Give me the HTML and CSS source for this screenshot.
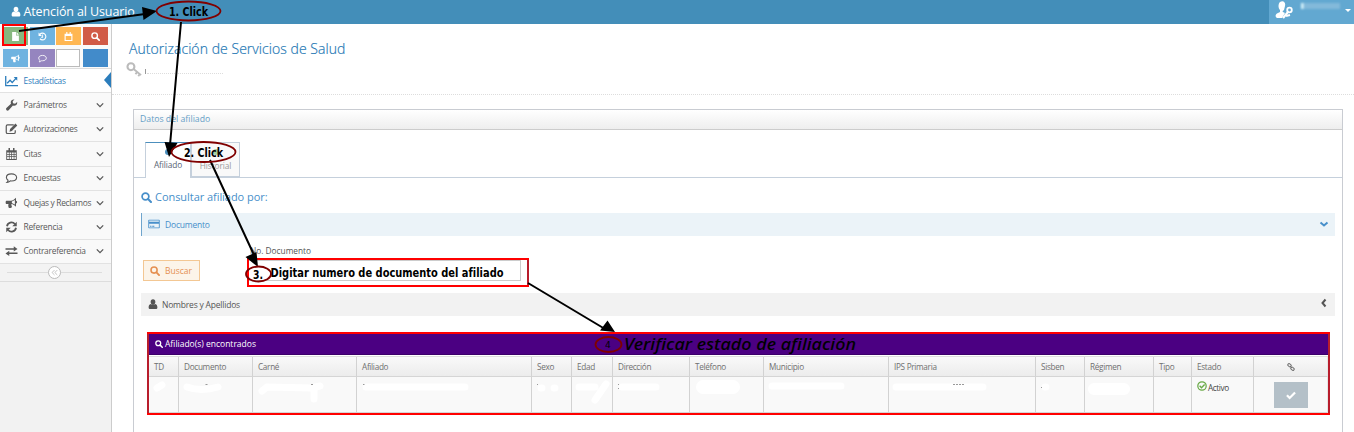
FILE: index.html
```html
<!DOCTYPE html>
<html lang="es">
<head>
<meta charset="utf-8">
<title>Atención al Usuario</title>
<link rel="stylesheet" href="styles.css">
</head>
<body>
<svg class="defs" width="0" height="0">
  <symbol id="user" viewBox="0 0 16 16"><path d="M8 .5c2.500 0 3.800 1.700 3.800 4.200S10 9 8 9 4.200 7.200 4.200 4.700 5.500.500 8 .500zM4.300 8C5.500 9.600 10.500 9.600 11.700 8c2.500.4 3.300 3 3.300 5.400 0 1.600-1 2.600-2.600 2.600H3.600C2 16 1 15 1 13.400 1 11 1.800 8.400 4.300 8z"/></symbol>
  <symbol id="search" viewBox="0 0 16 16"><circle cx="6.500" cy="6.500" r="4.900" fill="none" stroke="currentColor" stroke-width="2.500"/><path d="M10.300 10.300l4.200 4.200" stroke="currentColor" stroke-width="3" stroke-linecap="round"/></symbol>
  <symbol id="file" viewBox="0 0 16 16"><path d="M2 0h7v6h5v10H2zM10 0l4 5h-4z"/></symbol>
  <symbol id="history" viewBox="0 0 16 16"><path d="M3 4.500A6 6 0 1 1 3.500 12" fill="none" stroke="currentColor" stroke-width="2"/><path d="M1 1v6h6zM7.500 4.500H9V10H5.500V8.500h2z"/></symbol>
  <symbol id="calendar" viewBox="0 0 16 16"><path fill-rule="evenodd" d="M1 3h3V0h2v3h4V0h2v3h3v13H1zM2.200 6v2h2.300V6zm3.300 0v2h2.200V6zm3.200 0v2h2.200V6zm3.200 0v2h1.900V6zM2.200 9v2h2.300V9zm3.300 0v2h2.200V9zm3.200 0v2h2.200V9zm3.200 0v2h1.900V9zM2.200 12v2.500h2.300V12zm3.300 0v2.500h2.200V12zm3.200 0v2.500h2.200V12zm3.200 0v2.500h1.900V12z"/></symbol>
  <symbol id="calendar-o" viewBox="0 0 16 16"><path fill-rule="evenodd" d="M1 3h3V0h2v3h4V0h2v3h3v13H1zM3 7v7h10V7z"/></symbol>
  <symbol id="horn" viewBox="0 0 16 16"><path fill-rule="evenodd" d="M1 5h6c3 0 5-2 7-4v4c2 0 2 3.500 0 3.500V13c-2-2-4-3.500-6-3.700-.8 1.700.8 2.500.5 4C8 15 6 15 4.500 14.500 3.500 12.500 3.500 11 4 9.300H1c-1 0-1-4.300 0-4.300zM12.500 4L8.500 6v2l4 2z"/></symbol>
  <symbol id="comment" viewBox="0 0 16 16"><path d="M8 2.500c4 0 6.800 2 6.800 4.800S12 12 8 12l-1.500-.1C5 13.300 3.800 14 2 14c1-.9 1.300-1.700 1.400-3C2 10 1.200 8.800 1.200 7.300 1.200 4.500 4 2.500 8 2.500z" fill="none" stroke="currentColor" stroke-width="1.500"/></symbol>
  <symbol id="chart" viewBox="0 0 18 16"><path d="M1 1v13.500h17M3 11l4-4 3 3 5.500-6" fill="none" stroke="currentColor" stroke-width="1.800"/><path d="M12 2.500h5v5z"/></symbol>
  <symbol id="wrench" viewBox="0 0 16 16"><path d="M15.500 4c.8 3.500-2.500 6-5.600 4.800L4.200 15c-1.800 1.700-4.600-.9-3-2.900L7.300 6.200C6 3 8.500.1 12 .6L9.600 3l.4 2.800 2.800.5z"/></symbol>
  <symbol id="edit" viewBox="0 0 16 16"><path d="M11 2.500H2.700Q1 2.500 1 4.200v8.100Q1 14 2.700 14h8.600Q13 14 13 12.300V9.500" fill="none" stroke="currentColor" stroke-width="1.600"/><path d="M13.300.8l2.400 2.400L8.500 10.500 5.300 11.500 6.100 8z"/></symbol>
  <symbol id="refresh" viewBox="0 0 16 16"><path d="M2 7a6 6 0 0 1 10.500-3M14 9A6 6 0 0 1 3.500 12" fill="none" stroke="currentColor" stroke-width="2.400"/><path d="M15 1v6H9zM1 15V9h6z"/></symbol>
  <symbol id="exchange" viewBox="0 0 16 16"><path d="M0 4.200h11V1.700L16 5.300l-5 3.500V6.300H0zM16 10H5V7.700L0 11.200l5 3.500v-2.600h11z"/></symbol>
  <symbol id="down" viewBox="0 0 10 10"><path d="M1 3l4 4 4-4" fill="none" stroke="currentColor" stroke-width="1.600"/></symbol>
  <symbol id="key" viewBox="0 0 18 16"><circle cx="5.200" cy="5" r="3.700" fill="none" stroke="currentColor" stroke-width="2.200"/><path d="M8 7.500l8 6.500M12 10.500l-2 2.500M15 12.500l-2 2.500" fill="none" stroke="currentColor" stroke-width="2"/></symbol>
  <symbol id="card" viewBox="0 0 16 14"><path fill-rule="evenodd" d="M1 1h14q1 0 1 1v10q0 1-1 1H1q-1 0-1-1V2q0-1 1-1zm.2 1.200v1.600h13.600V2.200zM1.200 6.500v5.300h13.600V6.500zM2.500 9.500h2v1.200h-2zm3 0h3v1.200h-3z"/></symbol>
  <symbol id="link" viewBox="0 0 16 16"><g fill="none" stroke="currentColor" stroke-width="2"><rect x="1.500" y="2" width="7" height="5" rx="2" transform="rotate(40 5 4.500)"/><rect x="7.500" y="9" width="7" height="5" rx="2" transform="rotate(40 11 11.500)"/><path d="M6 6l4 4"/></g></symbol>
  <symbol id="check" viewBox="0 0 16 16"><path d="M1.500 8.500l4.300 4.200L14.500 4" fill="none" stroke="currentColor" stroke-width="3.600"/></symbol>
  <symbol id="ok" viewBox="0 0 16 16"><circle cx="8" cy="8" r="6.700" fill="none" stroke="currentColor" stroke-width="2"/><path d="M4.200 7.700l3 3 5-5" fill="none" stroke="currentColor" stroke-width="2.300"/></symbol>
</svg>

<header class="topbar">
  <div class="brand"><svg><use href="#user"/></svg><span>Atención al Usuario</span></div>
  <div class="account">
    <svg class="avatar" viewBox="0 0 18 18"><path d="M5 1c3-2 6 0 5 4L9 9c-1 1-2 1-1 2l2 1-3 5H2c-2-1-2-4 1-5l2-1V9C3 7 3 3 5 1z"/><path d="M8 17l5-6" stroke="#fff" stroke-width="2.200"/><circle cx="14.500" cy="9" r="2.300" fill="none" stroke="#fff" stroke-width="1.800"/><path d="M11 15l4-1" stroke="#fff" stroke-width="2"/></svg>
    <span class="masked-name"></span><i class="caret"></i>
  </div>
</header>

<div class="layout">
  <aside class="sidebar">
    <div class="shortcuts">
      <span class="sc green"><svg><use href="#file"/></svg></span>
      <span class="sc sky"><svg><use href="#history"/></svg></span>
      <span class="sc orange"><svg><use href="#calendar-o"/></svg></span>
      <span class="sc red"><svg><use href="#search"/></svg></span>
      <span class="sc sky"><svg><use href="#horn"/></svg></span>
      <span class="sc purple"><svg><use href="#comment"/></svg></span>
      <span class="sc blank"></span>
      <span class="sc blue"></span>
    </div>
    <nav class="menu">
      <a class="item active"><svg class="ic"><use href="#chart"/></svg><span>Estadísticas</span></a>
      <a class="item"><svg class="ic"><use href="#wrench"/></svg><span>Parámetros</span><svg class="arr"><use href="#down"/></svg></a>
      <a class="item"><svg class="ic"><use href="#edit"/></svg><span>Autorizaciones</span><svg class="arr"><use href="#down"/></svg></a>
      <a class="item"><svg class="ic"><use href="#calendar"/></svg><span>Citas</span><svg class="arr"><use href="#down"/></svg></a>
      <a class="item"><svg class="ic"><use href="#comment"/></svg><span>Encuestas</span><svg class="arr"><use href="#down"/></svg></a>
      <a class="item"><svg class="ic"><use href="#horn"/></svg><span>Quejas y Reclamos</span><svg class="arr"><use href="#down"/></svg></a>
      <a class="item"><svg class="ic"><use href="#refresh"/></svg><span>Referencia</span><svg class="arr"><use href="#down"/></svg></a>
      <a class="item"><svg class="ic"><use href="#exchange"/></svg><span>Contrareferencia</span><svg class="arr"><use href="#down"/></svg></a>
    </nav>
    <div class="collapse"><span><svg viewBox="0 0 10 10"><path d="M5 1.500L1.500 5 5 8.500M9 1.500L5.500 5 9 8.500" fill="none" stroke="currentColor"/></svg></span></div>
  </aside>

  <main class="content">
    <div class="page-head">
      <h1>Autorización de Servicios de Salud</h1>
      <div class="sub"><svg><use href="#key"/></svg><i></i><b></b></div>
    </div>
    <section class="panel">
      <h2 class="panel-title">Datos del afiliado</h2>
      <div class="tabs">
        <div class="tab current"><i></i><span>Afiliado</span></div>
        <div class="tab"><i></i><span>Historial</span></div>
      </div>
      <div class="panel-body">
        <h3 class="query"><svg><use href="#search"/></svg><span>Consultar afiliado por:</span></h3>
        <div class="acc open"><svg class="ic"><use href="#card"/></svg><span>Documento</span><svg class="chev" viewBox="0 0 10 10"><path d="M1.500 3.500L5 6.500l3.500-3" fill="none" stroke="currentColor" stroke-width="2"/></svg></div>
        <div class="form">
          <button class="buscar"><svg><use href="#search"/></svg><span>Buscar</span></button>
          <div class="field"><label>No. Documento</label><div class="input"></div></div>
        </div>
        <div class="acc"><svg class="ic"><use href="#user"/></svg><span>Nombres y Apellidos</span><svg class="chev left" viewBox="0 0 10 10"><path d="M6.500 1.500L3.500 5l3 3.500" fill="none" stroke="currentColor" stroke-width="2"/></svg></div>
        <div class="results">
          <div class="results-title"><svg><use href="#search"/></svg><span>Afiliado(s) encontrados</span></div>
          <table>
            <colgroup><col class="w30"><col class="w74"><col class="w104"><col class="w175"><col class="w40"><col class="w41"><col class="w77"><col class="w74"><col class="w125"><col class="w147"><col class="w49"><col class="w69"><col class="w38"><col class="w62"><col class="w74"></colgroup>
            <thead><tr><th>TD</th><th>Documento</th><th>Carné</th><th>Afiliado</th><th>Sexo</th><th>Edad</th><th>Dirección</th><th>Teléfono</th><th>Municipio</th><th>IPS Primaria</th><th>Sisben</th><th>Régimen</th><th>Tipo</th><th>Estado</th><th class="mid"><svg><use href="#link"/></svg></th></tr></thead>
            <tbody><tr><td></td><td></td><td></td><td></td><td></td><td></td><td></td><td></td><td></td><td></td><td></td><td></td><td></td><td><div class="state"><svg><use href="#ok"/></svg><span>Activo</span></div></td><td class="mid"><span class="pick"><svg><use href="#check"/></svg></span></td></tr></tbody>
          </table>
        </div>
      </div>
    </section>
  </main>
</div>

<svg class="notes" width="1354" height="432" viewBox="0 0 1354 432">
  <!-- erased cell values -->
  <g fill="none" stroke="#fff" stroke-width="7" stroke-linecap="round">
    <path d="M157 388l5-3M187 387q14 5 31 0M262 391l5-4 44 1 9-2M314 389v10M366 387h99M541 388h1M554 388h1M579 387h16M606 384l-11 16M622 387h34M772 386h69M896 387h87M1045 387h1"/>
    <path d="M703 387h30" stroke-width="14"/><path d="M1094 389h30" stroke-width="12"/>
  </g>
  <path d="M205.500 384.500h2M311 384.500h3M363 384.500h1.500M537.500 384v1M618.500 384v1M618.500 388v1M953 384.500h12M1041.500 387v1" stroke="#999" stroke-width="1" stroke-dasharray="2 1" fill="none"/>
  <g fill="none" stroke="#f00" stroke-width="2">
    <rect x="3" y="25" width="22" height="20"/>
    <rect x="248" y="259" width="280" height="27"/>
    <rect x="148" y="333" width="1181" height="81"/>
  </g>
  <path d="M148 334v79M1329 334v79M528 260v25" stroke="#b81d2c" stroke-width="2"/>
  <g stroke="#000" stroke-width="2">
    <path d="M19 31L145 14M181 22L170 145M210 160L254 255M528 283L605 329"/>
  </g>
  <path d="M157 11l-15-4 1.500 13zM169 157l-4.500-15 13 1zM258 267l-12.500-10 11-5zM615 332l-15-1.500 7.500-10z"/>
  <g fill="none" stroke="#800000" stroke-width="1.800">
    <ellipse cx="188.500" cy="11" rx="32" ry="9.500"/><ellipse cx="203.500" cy="152" rx="32" ry="10"/><ellipse cx="258.500" cy="274" rx="12.500" ry="7.500"/><ellipse cx="608.500" cy="344.500" rx="13" ry="7.500"/>
  </g>
  <g class="bold">
    <text x="169" y="16" textLength="39" lengthAdjust="spacingAndGlyphs">1. Click</text>
    <text x="184" y="157" textLength="39" lengthAdjust="spacingAndGlyphs">2. Click</text>
    <text x="253" y="279" textLength="10" lengthAdjust="spacingAndGlyphs">3.</text>
    <text x="270.500" y="277" textLength="233" lengthAdjust="spacingAndGlyphs">Digitar numero de documento del afiliado</text>
  </g>
  <text class="four" x="605" y="348">4</text>
  <text class="verify" x="624" y="350" textLength="232" lengthAdjust="spacingAndGlyphs">Verificar estado de afiliación</text>
</svg>
</body>
</html>
```
FILE: styles.css
```css
* { box-sizing: border-box; }
body { margin: 0; width: 1354px; height: 432px; overflow: hidden; background: #fff; font: 8px "Open Sans", sans-serif; color: #555; }
svg { fill: currentColor; flex: none; }
.defs { position: absolute; }
h1, h2, h3 { margin: 0; font-weight: 400; }
.topbar { height: 24px; background: #438eb9; color: #fff; display: flex; justify-content: space-between; }
.brand { display: flex; align-items: center; padding: 0 0 2px 11px; gap: 2.500px; font-size: 12.500px; letter-spacing: -.12px; }
.brand svg { width: 10px; height: 11px; }
.account { width: 85px; background: #62a8d1; display: flex; align-items: flex-start; padding-left: 6px; }
.avatar { width: 18px; height: 18px; margin-top: 1px; }
.masked-name { width: 39px; height: 6px; margin: 3px 0 0 8px; background: linear-gradient(90deg, #d8f3fb 0 2px, #83b9da 3px, #83b9da); filter: blur(1px); }
.caret { border: 3px solid transparent; border-top-color: #fff; margin: 9px 0 0 5px; }
.layout { display: flex; height: 408px; }
.sidebar { width: 112px; background: #f2f2f2; border-right: 1px solid #ccc; }
.shortcuts { height: 45px; background: #fafafa; border-bottom: 1px solid #ddd; display: grid; grid-template-columns: repeat(4, 25px); grid-auto-rows: 18px; gap: 4px 1.500px; padding: 3px 0 0 3px; }
.sc { display: flex; align-items: center; justify-content: center; color: #fff; }
.sc svg { width: 9px; height: 9px; }
.green { background: #87b87f; } .sky { background: #6fb3e0; } .orange { background: #ffb752; } .red { background: #d15b47; }
.purple { background: #9585bf; } .blank { background: #fff; border: 1px solid #bbb; margin-right: 1px; } .blue { background: #428bca; }
.item { height: 24.400px; display: flex; align-items: center; background: #f9f9f9; border-bottom: 1px solid #e2e2e2; padding: 0 0 1px 5px; color: #585858; font-size: 8.400px; }
.item .ic { width: 13px; height: 12px; margin: 1px 5.500px 0 0; }
.item .arr { width: 8px; height: 8px; margin: 1px 7px 0 auto; }
.item span { white-space: nowrap; letter-spacing: -.25px; }
.item:nth-child(6) span { letter-spacing: -.32px; }
.active { background: #fff; color: #2b7dbc; position: relative; }
.active::after { content: ""; position: absolute; right: 0; top: 3px; border: 8px solid transparent; border-width: 8.500px 7px 8.500px 0; border-right-color: #2b7dbc; }
.collapse { height: 18px; border-bottom: 1px solid #ddd; display: flex; justify-content: center; align-items: center; background: linear-gradient(#ddd, #ddd) 7px 8px / 95px 1px no-repeat #f3f3f3; }
.collapse span { width: 13px; height: 13px; border: 1px solid #bbb; border-radius: 50%; background: #fff; color: #aaa; display: flex; align-items: center; justify-content: center; margin-right: 2px; }
.collapse svg { width: 7px; height: 7px; }
.content { width: 1242px; }
.page-head { height: 71px; border-bottom: 1px dotted #ddd; padding: 15px 0 0 17px; }
h1 { color: #2679b5; font-size: 14px; font-weight: 300; line-height: 20px; letter-spacing: .05px; white-space: nowrap; -webkit-text-stroke: .2px #2679b5; }
.sub { display: flex; align-items: center; margin: 3px 0 0 -3px; color: #bbb; height: 15px; }
.sub svg { width: 17px; height: 15px; }
.sub i { width: 1px; height: 5px; background: #999; margin: 4px 0 0 2px; }
.sub b { border-bottom: 1px dotted #ddd; width: 76px; margin: 7px 0 0 1px; }
.panel { width: 1210px; height: 323px; margin: 14px 0 0 21px; border: 1px solid #c9ccd2; border-bottom: 0; }
.panel-title { height: 20px; line-height: 19px; padding-left: 6px; border-bottom: 1px solid #ccc; background: linear-gradient(#fff, #eee); color: #669fc7; font-size: 8.700px; }
.tabs { height: 48px; display: flex; align-items: flex-end; border-bottom: 1px solid #c5d0dc; padding-left: 11px; }
.tab { width: 49px; height: 35px; border: 1px solid #c5d0dc; background: #f9f9f9; color: #999; display: flex; flex-direction: column; align-items: center; font-size: 8.300px; letter-spacing: -.1px; padding-top: 6px; }
.tab i { width: 6px; height: 6px; background: #a5cf9e; border-radius: 3px; }
.tab span { line-height: 11px; margin-top: 5px; }
.current { width: 46px; height: 36px; margin-bottom: -1px; background: #fff; color: #576373; border-top: 1px solid #4c8fbd; border-bottom: 0; }
.current i { background: #4c8fbd; }
.current span { margin-top: 4px; }
.panel-body { padding: 10px 7px 0; }
.query { display: flex; align-items: center; gap: 3px; color: #478fca; font-size: 11px; letter-spacing: -.05px; height: 18px; line-height: 18px; }
.query svg { width: 11px; height: 11px; }
.acc { height: 23px; margin-top: 7px; background: #f2f2f2; display: flex; align-items: center; padding: 0 6px 1px 7px; font-size: 8.500px; letter-spacing: -.2px; }
.acc .ic { width: 10px; height: 10px; margin-right: 4px; }
.acc .chev { width: 10px; height: 10px; margin-left: auto; }
.acc .left { margin-top: -3px; }
.acc.open { background: #ebf3f8; border-left: 1px solid #6fa5cd; color: #478fca; padding-left: 6px; }
.open .ic { width: 12px; margin-right: 5px; }
.form { display: flex; height: 45px; align-items: flex-end; padding-left: 2px; }
.buscar { width: 57px; height: 21px; border: 1px dotted #d98c3a; outline: 1px solid #f3c793; outline-offset: -1px; background: #fcf4e9; color: #e59052; font: 8.500px "Open Sans", sans-serif; padding: 0 6px; display: flex; align-items: center; gap: 5px; }
.buscar svg { width: 10px; height: 10px; }
.field { margin-left: 48px; }
.field label { display: block; line-height: 11px; margin: 0 0 4px 2px; font-size: 8.300px; }
.input { width: 273px; height: 21px; border: 1px solid #ccc; }
.form + .acc { margin-top: 12px; }
.results { margin: 18px 0 0 8px; width: 1179px; }
.results-title { height: 21px; background: #4b0082; border-bottom: 1px solid #3c0069; color: #fff; display: flex; align-items: center; gap: 2px; padding: 0 0 2px 6px; font-size: 8.500px; }
.results-title svg { width: 8px; height: 8px; margin-top: 1px; }
table { width: 1179px; table-layout: fixed; border-collapse: separate; border-spacing: 0; border-top: 1px solid #ddd; margin-top: 1px; }
th, td { border-right: 1px solid #d2d2d2; border-bottom: 1px solid #d5d5d5; padding: 0 0 0 5px; text-align: left; font-weight: 400; }
th { height: 20px; background: linear-gradient(#f9f9f9, #ececec); color: #707070; font-size: 8.200px; letter-spacing: -.3px; padding-bottom: 1px; white-space: nowrap; }
td { height: 36px; background: #f9f9f9; vertical-align: top; }
td:last-child, th:last-child { border-right-color: #e6e6e6; }
.mid { text-align: center; padding: 0; }
th svg { width: 8px; height: 8px; display: block; margin: auto; }
.state { display: flex; align-items: center; padding-top: 4px; color: #444; font-size: 8.200px; letter-spacing: -.4px; height: 16px; gap: 1px; }
.state svg { width: 10px; height: 10px; color: #69aa46; margin-top: -2px; }
.pick { display: flex; width: 34px; height: 26px; margin: 5px auto 0; background: #b4c0c8; color: #fff; align-items: center; justify-content: center; }
.pick svg { width: 10px; height: 10px; }
.w30 { width: 30px; } .w74 { width: 74px; } .w104 { width: 104px; } .w175 { width: 175px; } .w40 { width: 40px; } .w41 { width: 41px; } .w77 { width: 77px; } .w125 { width: 125px; } .w147 { width: 147px; } .w49 { width: 49px; } .w69 { width: 69px; } .w38 { width: 38px; } .w62 { width: 62px; }
.notes { position: absolute; left: 0; top: 0; fill: #000; }
.bold { font: 700 11.500px "DejaVu Sans Condensed", "DejaVu Sans", sans-serif; }
.four { font: 9px "DejaVu Sans", sans-serif; }
.verify { font: italic 500 16px "Noto Sans", sans-serif; }
```
